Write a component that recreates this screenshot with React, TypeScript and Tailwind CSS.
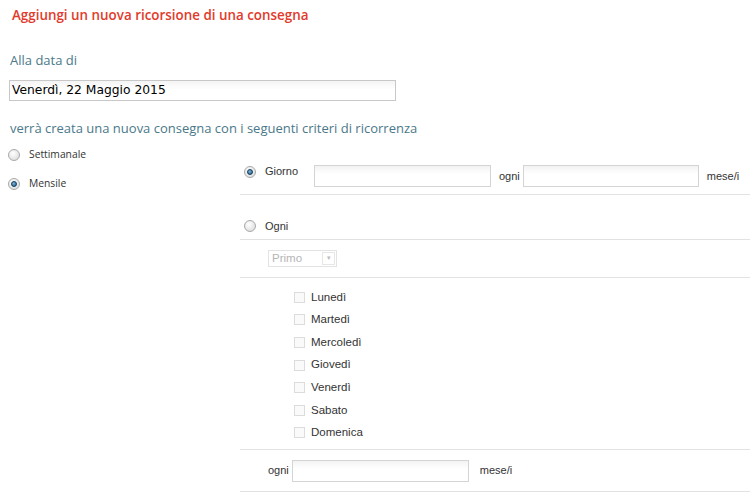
import React from "react";

function Radio({ checked }: { checked?: boolean }) {
  return (
    <span className="relative inline-flex h-[12px] w-[12px] shrink-0 items-center justify-center rounded-full border border-[#a9a9a9] bg-[radial-gradient(circle_at_40%_35%,#ffffff,#d6d6d6)]">
      {checked ? (
        <span className="h-[6px] w-[6px] rounded-full border border-[#123c5c] bg-[radial-gradient(circle_at_40%_35%,#7fb3d8,#1e5a86)]" />
      ) : null}
    </span>
  );
}

function Check() {
  return <span className="inline-block h-[11px] w-[11px] shrink-0 border border-[#dcdcdc] bg-[#fafafa]" />;
}

function TextInput({ w }: { w: string }) {
  return (
    <div
      className={`${w} h-[22px] shrink-0 border border-[#d4d4d4] bg-[linear-gradient(#f3f3f3,#ffffff_40%)]`}
    />
  );
}

const days = ["Lunedì", "Martedì", "Mercoledì", "Giovedì", "Venerdì", "Sabato", "Domenica"];

export default function App() {
  return (
    <div className="h-[494px] w-[750px] overflow-hidden bg-white font-['Open_Sans',sans-serif]">
      <div className="mt-[5px] h-[20px] pl-[12px] text-[13.4px] leading-[20px] font-semibold text-[#e23a2b]">
        Aggiungi un nuova ricorsione di una consegna
      </div>
      <div className="mt-[25px] h-[20px] pl-[10px] text-[13px] leading-[20px] text-[#4a7889]">Alla data di</div>
      <div className="mt-[10px] ml-[9px] flex h-[21px] w-[387px] items-center border border-[#c8c8c8] bg-[linear-gradient(#f4f4f4,#ffffff_45%)] pl-[2px] font-['DejaVu_Sans',sans-serif] text-[12.3px] text-black">
        Venerdì, 22 Maggio 2015
      </div>
      <div className="mt-[17px] h-[20px] pl-[10px] text-[13px] leading-[20px] text-[#4a7889]">
        verrà creata una nuova consegna con i seguenti criteri di ricorrenza
      </div>
      <div className="mt-[7px] flex">
        <div className="flex w-[240px] shrink-0 flex-col gap-[9px] text-[10.3px] text-[#333]">
          <div className="flex h-[20px] items-center pl-[8px]">
            <Radio />
            <span className="ml-[9px]">Settimanale</span>
          </div>
          <div className="flex h-[20px] items-center pl-[8px]">
            <Radio checked />
            <span className="ml-[9px]">Mensile</span>
          </div>
        </div>
        <div className="mt-[10px] flex-1 font-['Liberation_Sans',Arial,sans-serif] text-[11px] text-[#333]">
          <div className="flex h-[40px] items-start border-b border-[#e2e2e2] pt-[10px]">
            <div className="flex h-[13px] items-center pl-[4px]">
              <Radio checked />
              <span className="ml-[9px] w-[49px]">Giorno</span>
            </div>
            <TextInput w="w-[177px]" />
            <span className="ml-[8px] mr-[3px] flex h-[22px] items-center">ogni</span>
            <TextInput w="w-[176px]" />
            <span className="ml-[8px] flex h-[22px] items-center">mese/i</span>
          </div>
          <div className="flex h-[45px] items-start border-b border-[#e2e2e2] pt-[25px]">
            <div className="flex h-[12px] items-center pl-[4px]">
              <Radio />
              <span className="ml-[9px]">Ogni</span>
            </div>
          </div>
          <div className="flex h-[38px] items-center border-b border-[#e2e2e2] pl-[28px]">
            <div className="flex h-[17px] w-[69px] items-stretch border border-[#e3e3e3] bg-white">
              <span className="flex flex-1 items-center pl-[3px] text-[11.5px] text-[#b5b5b5]">Primo</span>
              <span className="m-[1px] flex w-[13px] items-center justify-center border border-[#e6e6e6] text-[7px] text-[#bbb]">
                ▾
              </span>
            </div>
          </div>
          <div className="flex h-[172px] flex-col border-b border-[#e2e2e2] pt-[8px] pl-[54px]">
            {days.map((d) => (
              <div key={d} className="flex h-[22.6px] items-center">
                <Check />
                <span className="ml-[6px] text-[11.5px]">{d}</span>
              </div>
            ))}
          </div>
          <div className="flex h-[42px] items-center border-b border-[#e2e2e2] pl-[28px]">
            <span className="mr-[3px]">ogni</span>
            <TextInput w="w-[177px]" />
            <span className="ml-[11px]">mese/i</span>
          </div>
        </div>
      </div>
    </div>
  );
}
